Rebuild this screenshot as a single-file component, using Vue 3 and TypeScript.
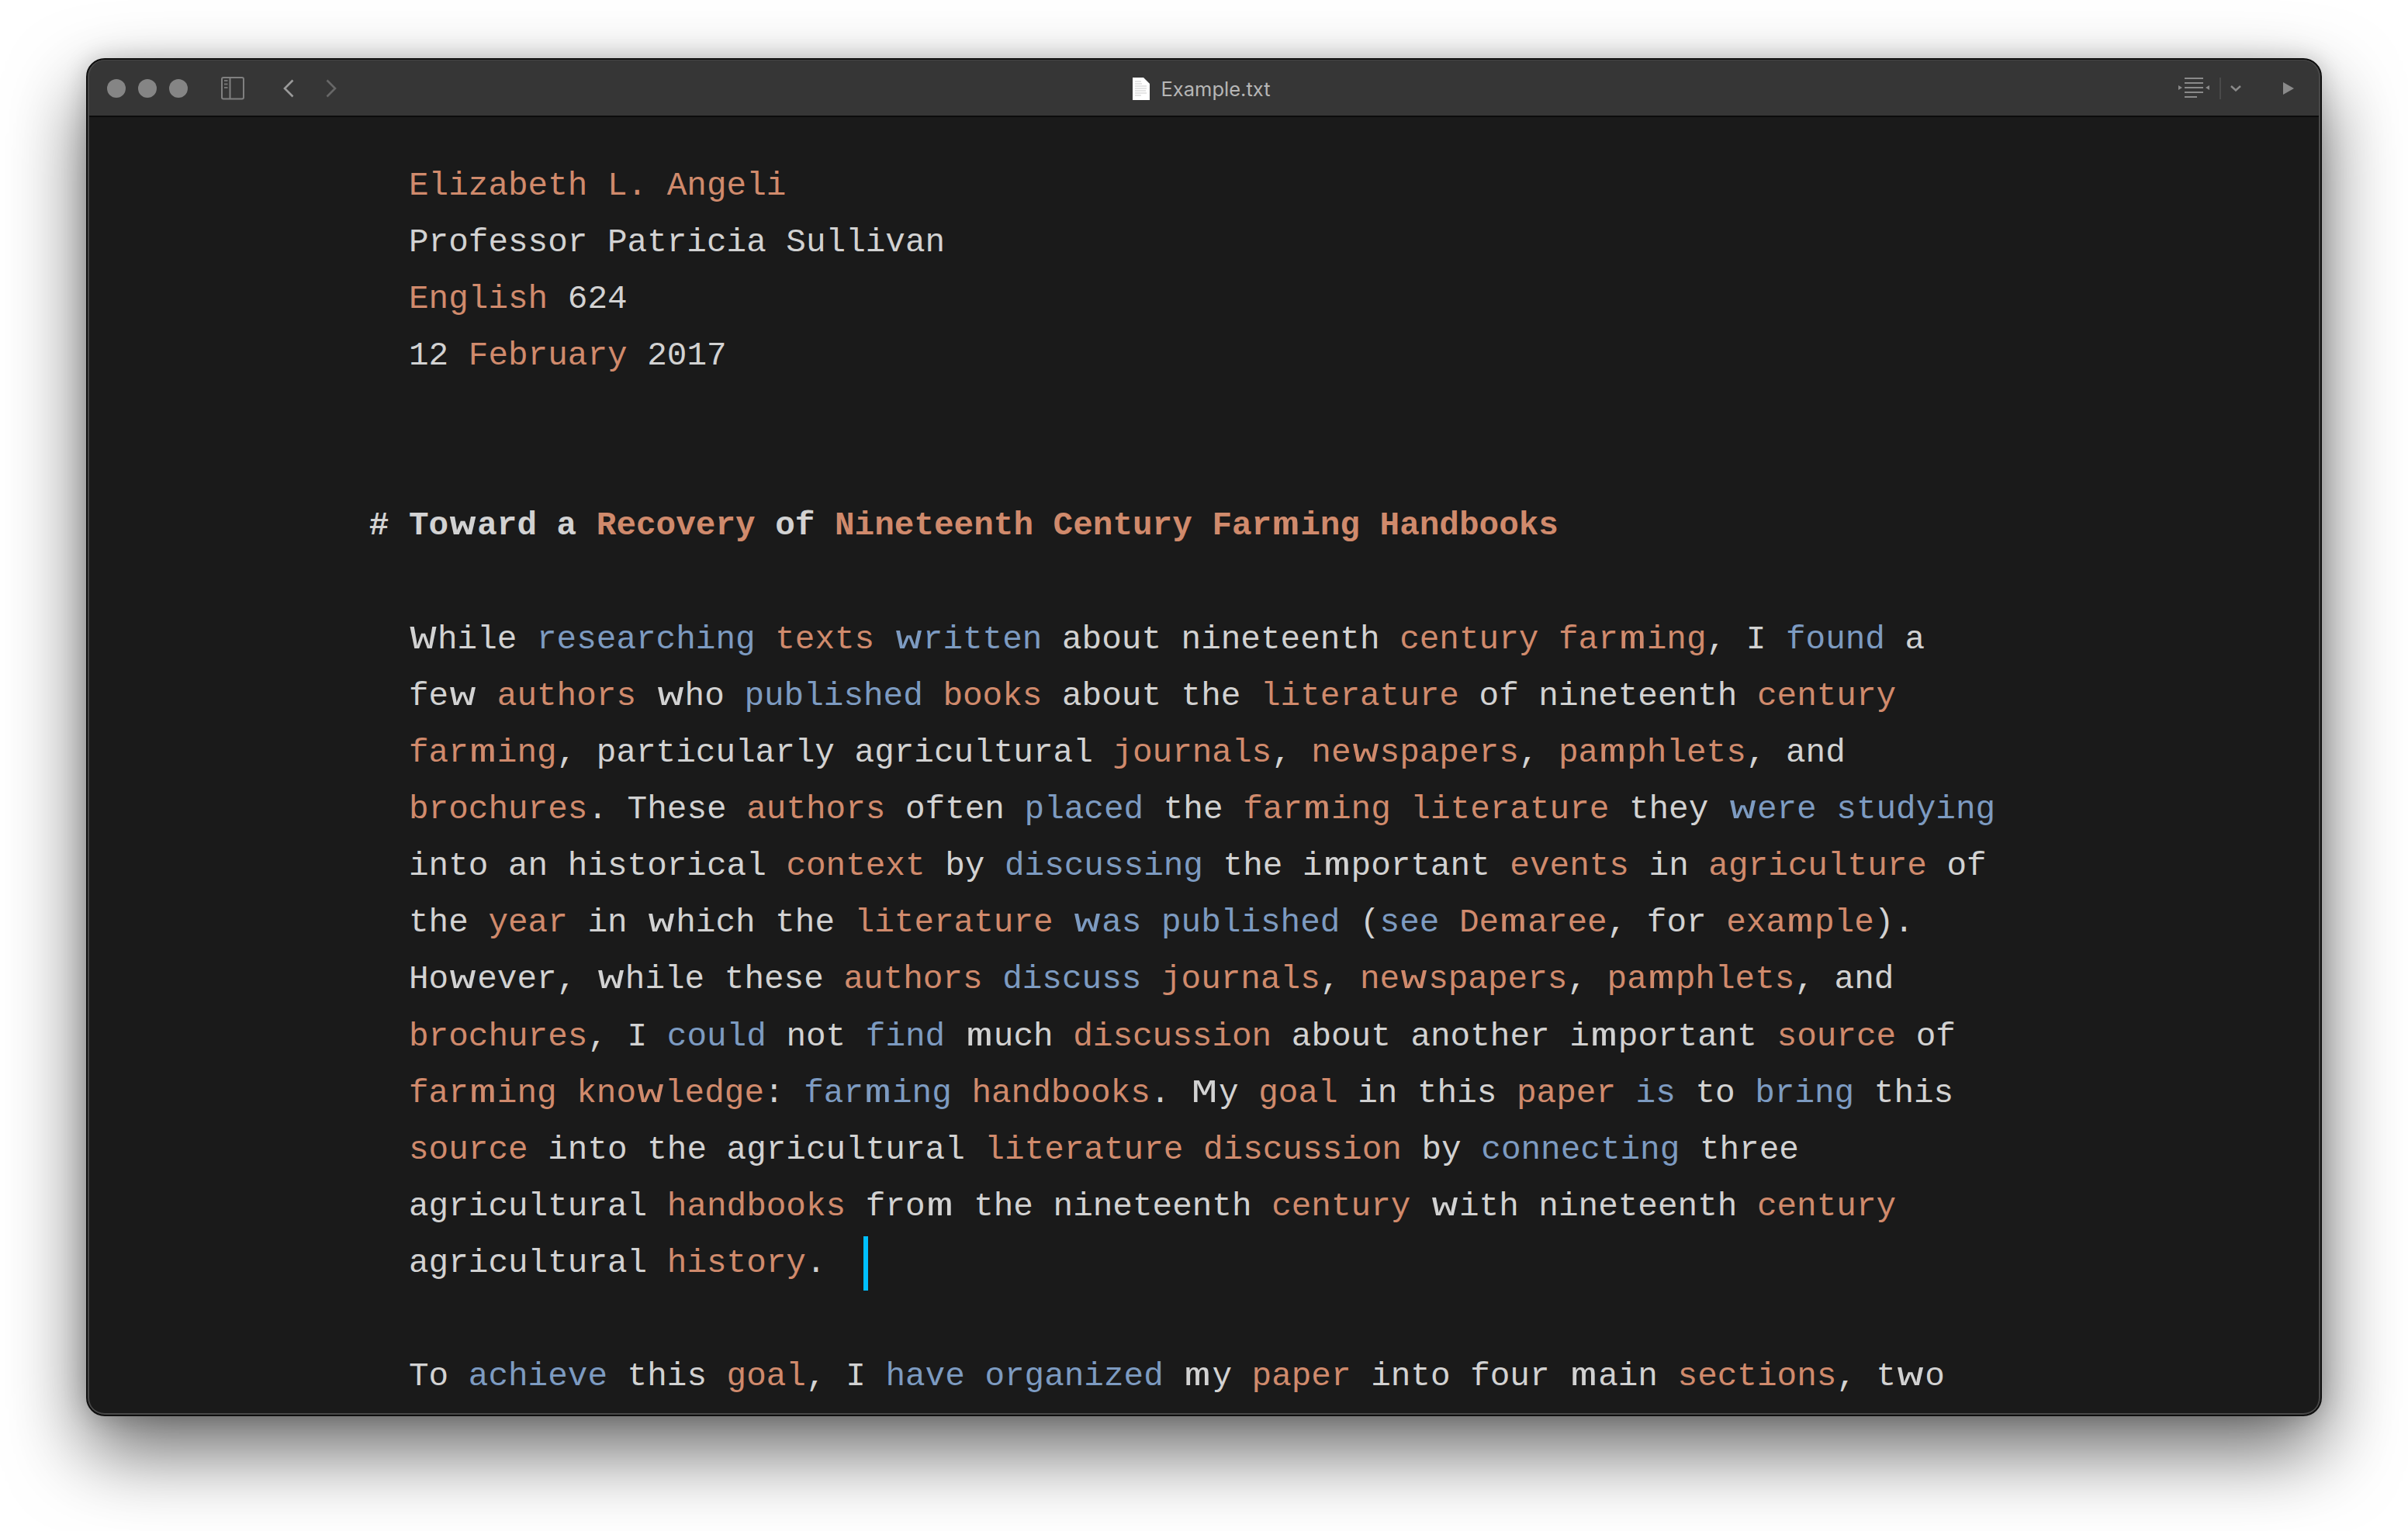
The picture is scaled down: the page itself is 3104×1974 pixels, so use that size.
<script setup lang="ts">
type Tone = 'plain' | 'noun' | 'verb'
interface Piece { text: string; wide: boolean }
interface Run { pieces: Piece[]; tone: Tone }

const source: string[] = [
  '[Elizabeth L. Angeli]',
  'Professor Patricia Sullivan',
  '[English] 624',
  '12 [February] 2017',
  '',
  '',
  '# Toward a [Recovery] of [Nineteenth Century Farming Handbooks]',
  '',
  'While {researching} [texts] {written} about nineteenth [century farming], I {found} a',
  'few [authors] who {published} [books] about the [literature] of nineteenth [century]',
  '[farming], particularly agricultural [journals], [newspapers], [pamphlets], and',
  '[brochures]. These [authors] often {placed} the [farming literature] they {were studying}',
  'into an historical [context] by {discussing} the important [events] in [agriculture] of',
  'the [year] in which the [literature] {was published} ({see} [Demaree], for [example]).',
  'However, while these [authors] {discuss} [journals], [newspapers], [pamphlets], and',
  '[brochures], I {could} not {find} much [discussion] about another important [source] of',
  '[farming knowledge]: {farming} [handbooks]. My [goal] in this [paper] {is} to {bring} this',
  '[source] into the agricultural [literature discussion] by {connecting} three',
  'agricultural [handbooks] from the nineteenth [century] with nineteenth [century]',
  'agricultural [history].  ',
  '',
  'To {achieve} this [goal], I {have organized} my [paper] into four main [sections], two'
]

// The editor font is a duospace: m and w take about one and a half cells.
function pieces(text: string): Piece[] {
  return text
    .split(/([mwMW])/)
    .filter((p) => p.length > 0)
    .map((p) => ({ text: p, wide: /^[mwMW]$/.test(p) }))
}

function parse(line: string): Run[] {
  const runs: Run[] = []
  const re = /\[([^\]]+)\]|\{([^}]+)\}|([^[{]+)/g
  let m: RegExpExecArray | null
  while ((m = re.exec(line))) {
    if (m[1]) runs.push({ pieces: pieces(m[1]), tone: 'noun' })
    else if (m[2]) runs.push({ pieces: pieces(m[2]), tone: 'verb' })
    else runs.push({ pieces: pieces(m[3]), tone: 'plain' })
  }
  return runs
}

const lines = source.map((raw, i) => ({
  id: i,
  heading: raw.startsWith('# '),
  caret: i === 19,
  runs: parse(raw)
}))
</script>

<template>
  <div class="page">
    <div class="window">
      <header class="titlebar">
        <div class="bar-left">
          <div class="lights">
            <span class="light"></span>
            <span class="light"></span>
            <span class="light"></span>
          </div>
          <svg class="ico-sidebar" width="30" height="30" viewBox="0 0 30 30" fill="none">
            <rect x="1" y="1" width="28" height="27.5" rx="2" stroke="#808080" stroke-width="2" />
            <path d="M11.5 1v27.5" stroke="#808080" stroke-width="2" />
            <path d="M4 5h4.5M4 9.5h4.5M4 14h4.5" stroke="#747474" stroke-width="2" />
          </svg>
          <svg class="ico-back" width="14" height="24" viewBox="0 0 14 24" fill="none">
            <path d="M12.5 1.5 2 12l10.5 10.5" stroke="#9a9a9a" stroke-width="2.6" />
          </svg>
          <svg class="ico-fwd" width="14" height="24" viewBox="0 0 14 24" fill="none">
            <path d="M1.5 1.5 12 12 1.5 22.5" stroke="#676767" stroke-width="2.6" />
          </svg>
        </div>
        <div class="title">
          <svg width="22" height="29" viewBox="0 0 22 29">
            <path d="M0 0h14l8 8v21H0z" fill="#fff" />
            <path d="M3 5h8M3 8h9M3 11h15M3 14h15M3 17h14M3 20h15M3 23h8" stroke="#b5b5b5" stroke-width=".7" />
          </svg>
          <span class="title-text">Example.txt</span>
        </div>
        <div class="bar-right">
          <svg width="40" height="28" viewBox="0 0 40 28" fill="none">
            <path d="M8 1h24M8 7h24M8 13h24M8 19h24M8 25h16" stroke="#8a8a8a" stroke-width="2" />
            <path d="M0 10l5 3-5 3zM40 10l-5 3 5 3z" fill="#8a8a8a" />
          </svg>
          <span class="separator"></span>
          <svg width="14" height="8" viewBox="0 0 14 8" fill="none">
            <path d="M1 1l6 5.5L13 1" stroke="#8a8a8a" stroke-width="2.4" />
          </svg>
          <svg class="ico-play" width="14" height="16" viewBox="0 0 14 16">
            <path d="M0 0l14 8-14 8z" fill="#8a8a8a" />
          </svg>
        </div>
      </header>
      <main class="editor">
        <div v-for="line in lines" :key="line.id" class="line" :class="{ heading: line.heading }">
          <span v-for="(run, r) in line.runs" :key="r" :class="run.tone"><template v-for="(p, k) in run.pieces" :key="k"><span v-if="p.wide" class="wide">{{ p.text }}</span><template v-else>{{ p.text }}</template></template></span>
          <span v-if="line.caret" class="caret"></span>
        </div>
      </main>
    </div>
  </div>
</template>

<style>
html, body { background: #fff; margin: 0; }
</style>

<style scoped>
.page {
  width: 3104px;
  height: 1974px;
  box-sizing: border-box;
  padding: 75px 111px 148px 111px;
  overflow: hidden;
}
.window {
  position: relative;
  height: 100%;
  box-sizing: border-box;
  border: 2px solid #0e0e0e;
  border-radius: 24px;
  overflow: hidden;
  background: #1a1a1a;
  display: flex;
  flex-direction: column;
  box-shadow: 0 44px 100px rgba(0, 0, 0, .6), 0 0 30px rgba(0, 0, 0, .18);
}
.window::after {
  content: "";
  position: absolute;
  inset: 0;
  border-radius: 22px;
  box-shadow: inset 2px 0 0 #484848, inset -2px 0 0 #484848, inset 0 -2px 0 #484848, inset 0 1px 0 #454545;
  pointer-events: none;
}
.titlebar {
  flex: 0 0 auto;
  height: 74px;
  box-sizing: border-box;
  background: #363636;
  border-bottom: 2px solid #0c0c0c;
  display: grid;
  grid-template-columns: 1fr auto 1fr;
  align-items: center;
  padding: 2px 34px 0 25px;
}
.bar-left { display: flex; align-items: center; }
.lights { display: flex; gap: 16px; }
.light { width: 24px; height: 24px; border-radius: 50%; background: #858585; }
.ico-sidebar { margin-left: 43px; }
.ico-back { margin-left: 50px; }
.ico-fwd { margin-left: 41px; }
.title { display: flex; align-items: center; gap: 14px; margin-left: 3px; }
.title-text { font-family: Inter, "Liberation Sans", sans-serif; font-size: 25.5px; color: #b6b6b6; }
.bar-right { display: flex; align-items: center; justify-content: flex-end; }
.separator { width: 2px; height: 28px; background: #4a4a4a; margin: 0 12px 0 13px; }
.ico-play { margin-left: 54px; }
.editor {
  flex: 1 1 auto;
  min-height: 0;
  padding: 51.5px 0 0 414px;
  overflow: hidden;
  font-family: "Liberation Mono", "DejaVu Sans Mono", monospace;
  font-size: 42.67px;
  color: #d2d2d2;
}
.line { height: 73.15px; line-height: 73.15px; white-space: pre; }
.heading { font-weight: 700; margin-left: -51.2px; }
.noun { color: #d08a6c; }
.verb { color: #7d9bc1; }
.plain { color: #d2d2d2; }
.wide {
  display: inline-block;
  width: 37px;
  text-align: center;
  transform: scaleX(1.33);
}
.caret {
  display: inline-block;
  width: 6px;
  height: 70px;
  margin: 0 -3px;
  background: #00bfff;
  vertical-align: middle;
}
</style>
